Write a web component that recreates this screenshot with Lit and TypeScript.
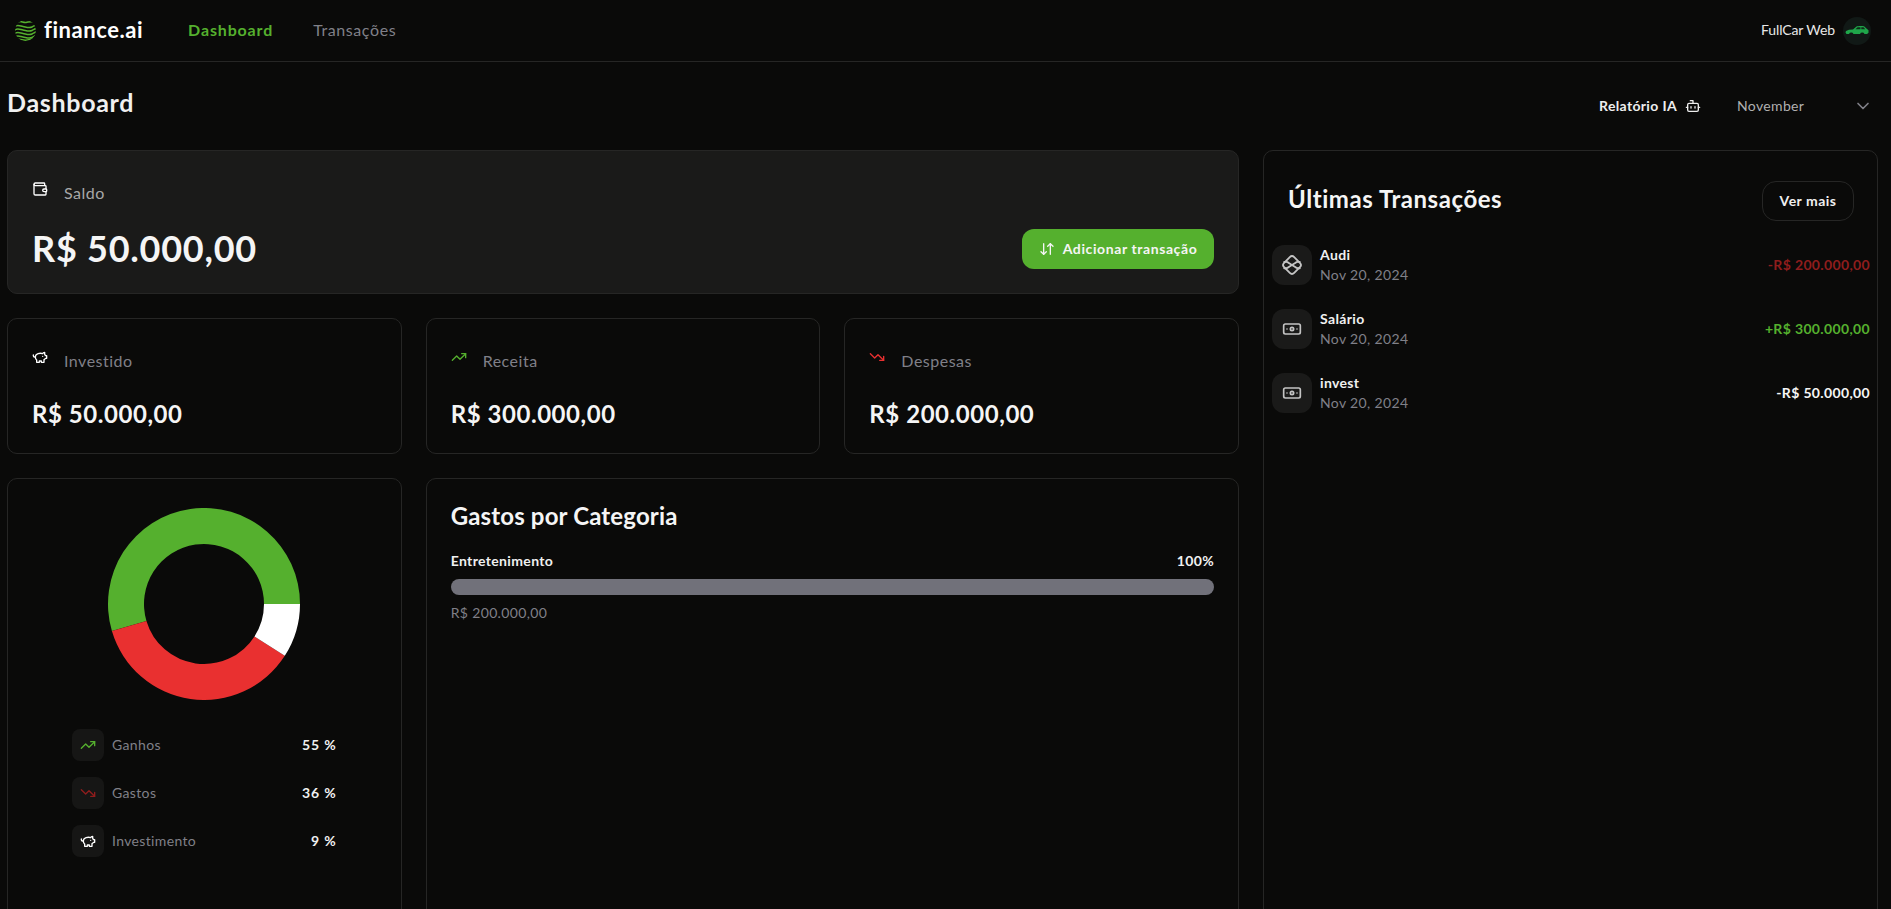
import { LitElement, html, css, svg } from "lit";
import { customElement } from "lit/decorators.js";

const I = (body: any, size = 16, cls = "") => html`<svg class=${cls} width=${size} height=${size} viewBox="0 0 24 24" fill="none" stroke="currentColor" stroke-width="2" stroke-linecap="round" stroke-linejoin="round">${body}</svg>`;

const wallet = svg`<path d="M19 7V4a1 1 0 0 0-1-1H5a2 2 0 0 0 0 4h15a1 1 0 0 1 1 1v4h-3a2 2 0 0 0 0 4h3a1 1 0 0 0 1-1v-2a1 1 0 0 0-1-1"/><path d="M3 5v14a2 2 0 0 0 2 2h15a1 1 0 0 0 1-1v-4"/>`;
const piggy = svg`<path d="M19 5c-1.500 0-2.800 1.400-3 2-3.500-1.500-11-.3-11 5 0 1.800 0 3 2 4.500V20h4v-2h3v2h4v-4c1-.5 1.700-1 2-2h2v-4h-2c0-1-.5-1.500-1-2V5z"/><path d="M2 9v1c0 1.100.9 2 2 2h1"/><path d="M16 11h.01"/>`;
const up = svg`<polyline points="22 7 13.5 15.5 8.5 10.5 2 17"/><polyline points="16 7 22 7 22 13"/>`;
const down = svg`<polyline points="22 17 13.5 8.5 8.5 13.5 2 7"/><polyline points="16 17 22 17 22 11"/>`;
const arrows = svg`<path d="m3 16 4 4 4-4"/><path d="M7 20V4"/><path d="m21 8-4-4-4 4"/><path d="M17 4v16"/>`;
const bot = svg`<path d="M12 8V4H8"/><rect width="16" height="12" x="4" y="8" rx="2"/><path d="M2 14h2"/><path d="M20 14h2"/><path d="M15 13v2"/><path d="M9 13v2"/>`;
const chevron = svg`<path d="m6 9 6 6 6-6"/>`;
const banknote = svg`<rect width="20" height="12" x="2" y="6" rx="2"/><circle cx="12" cy="12" r="2"/><path d="M6 12h.01M18 12h.01"/>`;
const pix = svg`<path d="M9.600 3.400a3.400 3.400 0 0 1 4.800 0l6.200 6.200a3.400 3.400 0 0 1 0 4.800l-6.200 6.200a3.400 3.400 0 0 1-4.800 0l-6.200-6.200a3.400 3.400 0 0 1 0-4.800Z"/><path d="M3.500 8.500h2c1.200 0 2.200.5 3 1.300L12 12l3.500-2.200c.8-.8 1.800-1.300 3-1.300h2"/><path d="M3.500 15.500h2c1.200 0 2.200-.5 3-1.300L12 12l3.500 2.200c.8.8 1.800 1.300 3 1.300h2"/>`;

function arc(cx: number, cy: number, r0: number, r1: number, a0: number, a1: number) {
  const p = (r: number, a: number) => {
    const t = (a * Math.PI) / 180;
    return `${(cx + r * Math.cos(t)).toFixed(2)} ${(cy + r * Math.sin(t)).toFixed(2)}`;
  };
  const large = a1 - a0 > 180 ? 1 : 0;
  return `M${p(r1, a0)}A${r1} ${r1} 0 ${large} 1 ${p(r1, a1)}L${p(r0, a1)}A${r0} ${r0} 0 ${large} 0 ${p(r0, a0)}Z`;
}

@customElement("app-root")
export class AppRoot extends LitElement {
  static styles = css`
    :host {
      display: block;
      height: 100vh;
      overflow: hidden;
      background: #0a0a09;
      color: #f5f5f5;
      font-family: "Lato", "Noto Sans", sans-serif;
      font-size: 14px;
      line-height: 20px;
      letter-spacing: 0.35px;
    }
    svg { display: block; flex: none; }
    nav {
      height: 61px;
      border-bottom: 1px solid #262625;
      display: flex;
      align-items: center;
      padding: 0 20px 0 15px;
    }
    .logo { display: flex; align-items: center; gap: 8px; }
    .logo span { font-size: 22px; font-weight: 700; color: #fff; letter-spacing: 0.55px; line-height: 28px; padding-bottom: 2px; }
    .links { display: flex; gap: 40px; margin-left: 45px; font-size: 16px; line-height: 24px; padding-bottom: 2px; }
    .links .on { color: #55b02e; font-weight: 700; letter-spacing: 0.85px; }
    .links .off { color: #808088; letter-spacing: 0.6px; }
    .user { margin-left: auto; display: flex; align-items: center; gap: 8px; color: #e8e8e8; font-size: 14px; letter-spacing: -0.1px; }
    .user span { padding-bottom: 2px; }
    .avatar { width: 28px; height: 28px; border-radius: 50%; background: #111916; display: flex; align-items: center; justify-content: center; }
    main { padding: 24px 12px 0 7px; }
    .top { display: flex; justify-content: space-between; align-items: flex-start; margin-bottom: 24px; }
    h1 { margin: 0; font-size: 25px; line-height: 32px; font-weight: 700; color: #f0f0f0; letter-spacing: 0.7px; }
    .controls { display: flex; align-items: center; }
    .ai { height: 40px; display: flex; align-items: center; gap: 8px; padding: 0 16px; font-weight: 700; color: #eee; }
    .select { width: 154px; height: 40px; margin-left: 8px; display: flex; align-items: center; justify-content: space-between; padding: 0 6px 0 12px; color: #b0b0b0; box-sizing: border-box; }
    .select svg { color: #808088; }
    .grid { display: grid; grid-template-columns: 1232px 615px; gap: 24px; }
    .left { display: flex; flex-direction: column; gap: 24px; }
    .card { border: 1px solid #262625; border-radius: 10px; box-sizing: border-box; }
    .stat { padding: 24px; }
    .stat.big { background: #1a1a19; }
    .row { display: flex; gap: 16px; margin-top: 6px; margin-bottom: 24px; color: #808088; font-size: 16px; line-height: 24px; align-items: flex-start; letter-spacing: 0.5px; }
    .big .row { color: #a8a8a8; }
    .row svg { color: #fff; }
    .row svg.g, .lg svg.g { color: #55b02e; }
    .row svg.r { color: #e93030; }
    .value { font-size: 24px; line-height: 34px; margin-bottom: -2px; font-weight: 700; color: #f5f5f5; letter-spacing: 0.55px; }
    .bigline { display: flex; justify-content: space-between; align-items: flex-start; height: 40px; }
    .big .value { font-size: 36px; line-height: 38px; margin-bottom: 0; letter-spacing: 0.75px; }
    .add { height: 40px; width: 192px; box-sizing: border-box; background: #55b02e; border-radius: 12px; display: flex; align-items: center; justify-content: center; gap: 8px; color: #f5f5f5; font-weight: 700; letter-spacing: 0.6px; }
    .three { display: grid; grid-template-columns: repeat(3, 1fr); gap: 24px; }
    .bottom { display: grid; grid-template-columns: 394.700px 813.300px; gap: 24px; }
    .pie { height: 520px; padding: 29px 64px 0; display: flex; flex-direction: column; }
    .pie > svg { align-self: center; margin-bottom: 29px; }
    .lg { display: flex; flex-direction: column; gap: 16px; }
    .lgrow { display: flex; align-items: center; gap: 8px; color: #808088; }
    .lgrow b { margin-left: auto; font-weight: 700; color: #f0f0f0; letter-spacing: 0.9px; }
    .ico { width: 32px; height: 32px; border-radius: 8px; background: #161615; display: flex; align-items: center; justify-content: center; color: #fff; }
    .ico .dr { color: #8f1d1d; }
    .cat { padding: 21px 24px 0; }
    h2 { margin: 0; font-size: 24px; line-height: 32px; font-weight: 700; color: #f5f5f5; letter-spacing: 0.15px; }
    .catrow { display: flex; justify-content: space-between; margin-top: 19px; font-weight: 700; color: #f0f0f0; }
    .bar { height: 16px; border-radius: 8px; background: #71717a; margin: 8px 0; }
    .muted { color: #808088; }
    .tx { height: 800px; padding: 30px 7px 0 8px; }
    .txhead { display: flex; justify-content: space-between; align-items: flex-start; padding: 0 16px; margin-bottom: 24px; }
    .txhead h2 { margin-top: 2px; letter-spacing: 0.55px; }
    .more { width: 92px; height: 40px; box-sizing: border-box; border: 1px solid #262625; border-radius: 14px; display: flex; align-items: center; justify-content: center; font-weight: 700; color: #f0f0f0; letter-spacing: 0.5px; }
    .list { display: flex; flex-direction: column; gap: 24px; }
    .item { display: flex; align-items: center; height: 40px; gap: 8px; }
    .tile { width: 40px; height: 40px; border-radius: 12px; background: #1a1a19; display: flex; align-items: center; justify-content: center; color: #c4c4c4; }
    .name { font-weight: 700; color: #f0f0f0; }
    .amt { margin-left: auto; font-weight: 700; }
    .red { color: #8f1d1d; }
    .green { color: #55b02e; }
    .white { color: #f5f5f5; }
  `;

  render() {
    const c = 96;
    return html`
      <nav>
        <div class="logo">
          <svg width="21" height="21" viewBox="0 0 21 21" fill="none">
            <defs><clipPath id="ball"><circle cx="10.5" cy="10.5" r="10.5"/></clipPath></defs>
            <g clip-path="url(#ball)" stroke="#55b02e" stroke-width="1.5">
              <path d="M3 2c3-1.500 5 1 8 .5s5-1.500 8-.5"/>
              <path d="M-1 7c3-3 6-1 9-.5s6 2 9 .5 3-2 5-2"/>
              <path d="M-1 10.500c3-3 6-1 9-.5s6 2 9 .5 3-2 5-2"/>
              <path d="M-1 14c3-3 6-1 9-.5s6 2 9 .5 3-2 5-2"/>
              <path d="M-1 17.500c3-3 6-1 9-.5s6 2 9 .5 3-2 5-2"/>
              <path d="M2 19.500c3-1 5 .5 8 .7s5-1 8-1.500"/>
            </g>
          </svg>
          <span>finance.ai</span>
        </div>
        <div class="links"><span class="on">Dashboard</span><span class="off">Transações</span></div>
        <div class="user">
          <span>FullCar Web</span>
          <div class="avatar">
            <svg width="24" height="11" viewBox="0 0 24 11"><path fill="#1fa64a" d="M1 6 4 4.800 8 4.500 11.500 1.500C13 .8 17 .8 19 1.300L22 4l1.500 1.300v2.400L22 9h-2.500a2.500 2.500 0 0 0-4.500 0H8.500a2.500 2.500 0 0 0-4.500 0H1.500L.5 7.500Z"/><path fill="#0f2a19" d="M12.500 2.200h3v2.100h-5ZM16.300 2.200h2.200l1.800 2.100h-4Z"/></svg>
          </div>
        </div>
      </nav>
      <main>
        <div class="top">
          <h1>Dashboard</h1>
          <div class="controls">
            <div class="ai"><span>Relatório IA</span>${I(bot)}</div>
            <div class="select"><span>November</span>${I(chevron, 20)}</div>
          </div>
        </div>
        <div class="grid">
          <div class="left">
            <div class="card stat big">
              <div class="row">${I(wallet)}<span>Saldo</span></div>
              <div class="bigline">
                <div class="value">R$ 50.000,00</div>
                <div class="add">${I(arrows)}<span>Adicionar transação</span></div>
              </div>
            </div>
            <div class="three">
              <div class="card stat"><div class="row">${I(piggy)}<span>Investido</span></div><div class="value">R$ 50.000,00</div></div>
              <div class="card stat"><div class="row">${I(up, 16, "g")}<span>Receita</span></div><div class="value">R$ 300.000,00</div></div>
              <div class="card stat"><div class="row">${I(down, 16, "r")}<span>Despesas</span></div><div class="value">R$ 200.000,00</div></div>
            </div>
            <div class="bottom">
              <div class="card pie">
                <svg width="192" height="192" viewBox="0 0 192 192">
                  <path fill="#55b02e" d=${arc(c, c, 60, 96, 163.6, 360)}/>
                  <path fill="#e93030" d=${arc(c, c, 60, 96, 32.7, 163.6)}/>
                  <path fill="#ffffff" d=${arc(c, c, 60, 96, 0, 32.7)}/>
                </svg>
                <div class="lg">
                  <div class="lgrow"><div class="ico">${I(up, 16, "g")}</div><span>Ganhos</span><b>55 %</b></div>
                  <div class="lgrow"><div class="ico">${I(down, 16, "dr")}</div><span>Gastos</span><b>36 %</b></div>
                  <div class="lgrow"><div class="ico">${I(piggy)}</div><span>Investimento</span><b>9 %</b></div>
                </div>
              </div>
              <div class="card cat">
                <h2>Gastos por Categoria</h2>
                <div class="catrow"><span>Entretenimento</span><span>100%</span></div>
                <div class="bar"></div>
                <div class="muted">R$ 200.000,00</div>
              </div>
            </div>
          </div>
          <div class="card tx">
            <div class="txhead"><h2>Últimas Transações</h2><div class="more">Ver mais</div></div>
            <div class="list">
              ${[
                ["Audi", pix, "-R$ 200.000,00", "red", 22],
                ["Salário", banknote, "+R$ 300.000,00", "green", 20],
                ["invest", banknote, "-R$ 50.000,00", "white", 20],
              ].map(
                ([n, ic, a, col, s]) => html`<div class="item">
                  <div class="tile">${I(ic, s as number)}</div>
                  <div><div class="name">${n}</div><div class="muted">Nov 20, 2024</div></div>
                  <div class="amt ${col}">${a}</div>
                </div>`
              )}
            </div>
          </div>
        </div>
      </main>
    `;
  }
}
